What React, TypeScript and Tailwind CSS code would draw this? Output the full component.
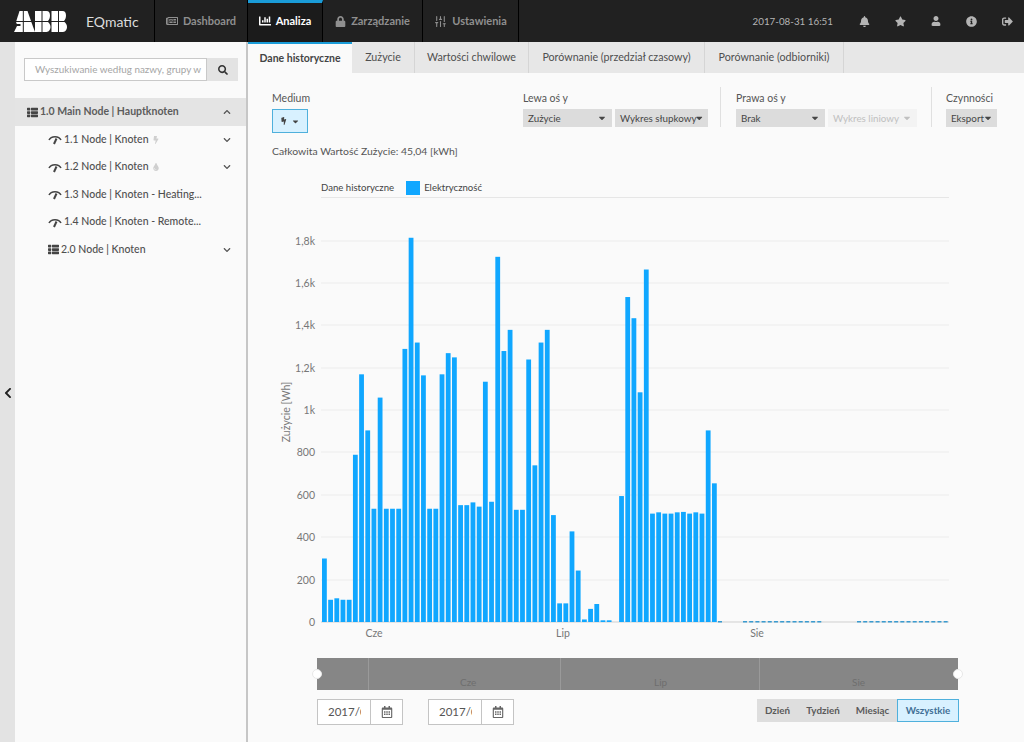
import { SlidersVertical } from "lucide-react";
import { FaBell, FaStar, FaUser, FaInfoCircle, FaLock, FaThList, FaBolt, FaTint, FaRegNewspaper, FaRegCalendarAlt, FaCaretDown, FaChevronLeft, FaChevronDown, FaChevronUp, FaSearch, FaChartBar, FaSignOutAlt } from "react-icons/fa";

const font = "font-['Lato',sans-serif]";

const bars = [
  300, 105, 112, 105, 105, 790, 1170, 905, 535, 1060, 535, 535, 535, 1290, 1815, 1320, 1165, 535, 535, 1170,
  1270, 1250, 552, 552, 565, 545, 1135, 568, 1725, 1280, 1380, 530, 530, 1240, 740, 1320, 1380, 505, 88, 88,
  428, 243, 12, 62, 85, 8, 8, 0, 595, 1535, 1435, 1085, 1665, 512, 518, 512, 512, 518, 520, 512, 518, 512, 905, 655,
];

const ticks = ["0", "200", "400", "600", "800", "1k", "1,2k", "1,4k", "1,6k", "1,8k"];
const tickY = [622, 580, 537, 495, 452, 410, 368, 325, 283, 241];

// dashes for the days with almost no usage
const dashes: number[] = [718];
for (let x = 743; x < 823; x += 6.19) dashes.push(x);
for (let x = 857; x < 948; x += 6.19) dashes.push(x);

function Logo() {
  return (
    <svg width="53" height="21" viewBox="0 0 53 21" fill="#fff">
      <polygon points="5.500,0 8.800,0 8.800,10 2.300,10" />
      <polygon points="2,11 8.800,11 8.800,21 0,21 3,15 6.500,15 6.500,13 2.800,13" />
      <polygon points="9.800,0 13.500,0 17,10 9.800,10" />
      <polygon points="9.800,11 17.300,11 21,21 9.800,21" />
      <rect x="21" y="0" width="6.500" height="10" />
      <rect x="21" y="11" width="6.500" height="10" />
      <path d="M28.500 0h4c2.500 0 3.500 2 3.500 4.500 0 2-.7 4-2 5.500h-5.500z" />
      <path d="M28.500 11h5.500c1.500 1.200 2.500 3 2.500 5s-1.500 5-4 5h-4z" />
      <rect x="37.500" y="0" width="6.500" height="10" />
      <rect x="37.500" y="11" width="6.500" height="10" />
      <path d="M45 0h3.500c2.500 0 3.500 2 3.500 4.500 0 2-.7 4-2 5.500h-5z" />
      <path d="M45 11h5.500c1.500 1.200 2.500 3 2.500 5s-1.500 5-4 5h-4z" />
    </svg>
  );
}

function NavItem({ icon, label, active, w }: { icon: React.ReactNode; label: string; active?: boolean; w: string }) {
  return (
    <div className={`${w} h-full flex items-center justify-center gap-[5px] border-r border-black text-[11px] font-bold ${active ? "bg-[#1b1b1b] text-white border-t-[3px] border-t-[#1a9cd8] pb-[3px]" : "text-[#8f8f8f]"}`}>
      {icon}
      <span>{label}</span>
    </div>
  );
}

function Select({ label, w, disabled }: { label: string; w: string; disabled?: boolean }) {
  return (
    <div className={`${w} h-[18px] flex items-center justify-between px-[5px] text-[9.800px] whitespace-nowrap ${disabled ? "bg-[#f3f3f3] text-[#c0c0c0]" : "bg-[#dcdcdc] text-[#464646]"}`}>
      <span>{label}</span>
      <FaCaretDown size={10} />
    </div>
  );
}

function TreeRow({ icon, label, extra, chevron }: { icon: React.ReactNode; label: string; extra?: React.ReactNode; chevron?: boolean }) {
  return (
    <div className="h-[27.5px] flex items-center pl-[33px] pr-[15px] text-[10.500px] font-medium text-[#4f4f4f]">
      {icon}
      <span className="ml-[2px]">{label}</span>
      {extra}
      {chevron && <FaChevronDown size={8} className="ml-auto text-[#555]" />}
    </div>
  );
}

function Meter() {
  return (
    <svg width="14" height="11" viewBox="0 0 14 11" fill="none" stroke="#444" strokeWidth="1.500">
      <path d="M1 6C3 1.500 11 1.500 13 6" />
      <path d="M8.500 4.500 6 10" strokeWidth="2" />
    </svg>
  );
}

function DateInput() {
  return (
    <div className="w-[86px] h-[26px] flex border border-[#c4c4c4] bg-white">
      <div className="w-[53px] border-r border-[#c4c4c4] pl-[10px] flex items-center text-[11.5px] text-[#555]">
        <input readOnly value="2017/06/01" className="w-[33px] bg-transparent outline-none" />
      </div>
      <div className="flex-1 flex items-center justify-center text-[#666]">
        <FaRegCalendarAlt size={12} />
      </div>
    </div>
  );
}

function Chart() {
  return (
    <svg width="776" height="456" viewBox="248 197 776 456" className="block">
      <line x1="321" x2="949" y1="197.500" y2="197.500" stroke="#e6e6e6" />
      {tickY.map((y, i) => (
        <g key={y}>
          <line x1="321" x2="949" y1={y} y2={y} stroke={i === 0 ? "#cfcfcf" : "#ececec"} />
          <text x="315" y={y + 3.500} textAnchor="end" fontSize="10.500" fill="#777">{ticks[i]}</text>
        </g>
      ))}
      <text transform="translate(290 412) rotate(-90)" textAnchor="middle" fontSize="10.500" fill="#777">Zużycie [Wh]</text>
      {bars.map((v, i) => v > 0 && (
        <rect key={i} x={322 + i * 6.19} y={622 - v * 0.2117} width="4.800" height={Math.max(v * 0.2117, 1)} fill="#10a7ff" />
      ))}
      {dashes.map((x) => (
        <rect key={x} x={x} y="621" width="4" height="1.500" fill="#3a9bd0" />
      ))}
      <text x="374" y="637" textAnchor="middle" fontSize="10.500" fill="#777">Cze</text>
      <text x="563" y="637" textAnchor="middle" fontSize="10.500" fill="#777">Lip</text>
      <text x="757" y="637" textAnchor="middle" fontSize="10.500" fill="#777">Sie</text>
    </svg>
  );
}

export default function App() {
  return (
    <div className={`w-[1024px] h-[742px] overflow-hidden flex flex-col bg-[#fafafa] ${font}`}>
      <header className="h-[42px] shrink-0 bg-[#212121] flex items-center">
        <div className="w-[155px] h-full flex items-center border-r border-black pl-[14px]">
          <Logo />
          <span className="ml-[19px] text-[14px] text-[#dcdcdc]">EQmatic</span>
        </div>
        <NavItem w="w-[93px]" label="Dashboard" icon={<FaRegNewspaper size={12} />} />
        <NavItem w="w-[75px]" active label="Analiza" icon={<FaChartBar size={12} />} />
        <NavItem w="w-[100px]" label="Zarządzanie" icon={<FaLock size={11} />} />
        <NavItem w="w-[96px]" label="Ustawienia" icon={<SlidersVertical size={13} />} />
        <div className="ml-auto flex items-center text-[#b4b4b4] pr-[11px]">
          <span className="text-[9.800px] mr-[26px]">2017-08-31 16:51</span>
          <div className="flex items-center gap-[25px]">
            <FaBell size={11} />
            <FaStar size={11} />
            <FaUser size={10} />
            <FaInfoCircle size={11} />
            <FaSignOutAlt size={11} />
          </div>
        </div>
      </header>

      <div className="flex-1 flex min-h-0">
        <div className="w-[15px] shrink-0 bg-[#e3e3e3] flex items-center justify-center pt-[2px]">
          <FaChevronLeft size={12} className="text-[#222]" />
        </div>
        <aside className="w-[231px] shrink-0 bg-[#fafafa] pt-[16px]">
          <div className="ml-[9px] w-[214px] h-[23px] flex">
            <div className="w-[183px] border border-[#c9c9c9] bg-white flex items-center pl-[10px] text-[9.900px] text-[#a5a5a5] whitespace-nowrap">Wyszukiwanie według nazwy, grupy w</div>
            <div className="w-[31px] bg-[#e3e3e3] flex items-center justify-center text-[#333]">
              <FaSearch size={10} />
            </div>
          </div>
          <div className="mt-[17px] h-[28px] bg-[#e4e4e4] flex items-center pl-[12px] pr-[15px] text-[10.500px] font-bold text-[#5c5c5c]">
            <FaThList size={11} className="text-[#444]" />
            <span className="ml-[2px]">1.0 Main Node | Hauptknoten</span>
            <FaChevronUp size={8} className="ml-auto text-[#555]" />
          </div>
          <TreeRow icon={<Meter />} label="1.1 Node | Knoten" chevron extra={<FaBolt size={8} className="ml-[3px] text-[#cfcfcf]" />} />
          <TreeRow icon={<Meter />} label="1.2 Node | Knoten" chevron extra={<FaTint size={8} className="ml-[3px] text-[#cfcfcf]" />} />
          <TreeRow icon={<Meter />} label="1.3 Node | Knoten - Heating..." />
          <TreeRow icon={<Meter />} label="1.4 Node | Knoten - Remote..." />
          <TreeRow icon={<FaThList size={11} className="text-[#444]" />} label="2.0 Node | Knoten" chevron />
        </aside>
        <div className="w-[2px] shrink-0 bg-[#c6c6c6]" />

        <main className="flex-1 min-w-0 flex flex-col">
          <div className="h-[31px] shrink-0 bg-[#e7e7e7] flex text-[10.700px] text-[#4f4f4f]">
            <div className="w-[104px] h-[32px] bg-[#fafafa] border-t-[2px] border-t-[#1a9cd8] flex items-center justify-center text-[10.500px] font-bold text-[#444]">Dane historyczne</div>
            <div className="w-[63px] flex items-center justify-center border-r border-[#d5d5d5]">Zużycie</div>
            <div className="w-[114px] flex items-center justify-center border-r border-[#d5d5d5]">Wartości chwilowe</div>
            <div className="w-[176px] flex items-center justify-center border-r border-[#d5d5d5]">Porównanie (przedział czasowy)</div>
            <div className="w-[139px] flex items-center justify-center border-r border-[#d5d5d5]">Porównanie (odbiorniki)</div>
          </div>

          <div className="flex pl-[24px] pt-[14px] h-[54px] shrink-0 text-[10.500px] text-[#555]">
            <div className="w-[251px]">
              <div className="h-[22px] pt-[4px] leading-[14px]">Medium</div>
              <div className="w-[36px] h-[24px] bg-[#d8f1ff] border border-[#4fb0dc] flex items-center justify-center gap-[3px] text-[#444]">
                <FaBolt size={8} className="-rotate-12" />
                <FaCaretDown size={9} />
              </div>
            </div>
            <div className="w-[198px] border-r border-[#e0e0e0]">
              <div className="h-[22px] pt-[4px] leading-[14px]">Lewa oś y</div>
              <div className="flex gap-[3px]">
                <Select w="w-[89px]" label="Zużycie" />
                <Select w="w-[93px]" label="Wykres słupkowy" />
              </div>
            </div>
            <div className="w-[211px] pl-[15px] border-r border-[#e0e0e0]">
              <div className="h-[22px] pt-[4px] leading-[14px]">Prawa oś y</div>
              <div className="flex gap-[3px]">
                <Select w="w-[89px]" label="Brak" />
                <Select w="w-[89px]" label="Wykres liniowy" disabled />
              </div>
            </div>
            <div className="pl-[14px]">
              <div className="h-[22px] pt-[4px] leading-[14px]">Czynności</div>
              <Select w="w-[51px]" label="Eksport" />
            </div>
          </div>

          <div className="pl-[24px] mt-[17px] text-[10.400px] text-[#555] leading-[14px]">Całkowita Wartość Zużycie: 45,04 [kWh]</div>

          <div className="ml-[73px] mt-[21px] h-[18px] flex items-center text-[9.600px] text-[#444]">
            <span>Dane historyczne</span>
            <span className="ml-[12px] w-[14px] h-[14px] bg-[#10a7ff]" />
            <span className="ml-[4px]">Elektryczność</span>
          </div>

          <Chart />

          <div className="ml-[69px] w-[641px] h-[32px] mt-[5px] bg-[#868686] relative text-[10px] text-[#6e6e6e]">
            <span className="absolute left-[51px] top-0 h-full w-px bg-[#9a9a9a]" />
            <span className="absolute left-[243px] top-0 h-full w-px bg-[#9a9a9a]" />
            <span className="absolute left-[442px] top-0 h-full w-px bg-[#9a9a9a]" />
            <span className="absolute left-[143px] top-[17px]">Cze</span>
            <span className="absolute left-[337px] top-[17px]">Lip</span>
            <span className="absolute left-[535px] top-[17px]">Sie</span>
            <span className="absolute -left-[5px] top-[11px] w-[10px] h-[10px] rounded-full bg-white border border-[#e8e8e8]" />
            <span className="absolute -right-[5px] top-[11px] w-[10px] h-[10px] rounded-full bg-white border border-[#e8e8e8]" />
          </div>

          <div className="ml-[69px] w-[642px] mt-[9px] flex items-start">
            <DateInput />
            <div className="ml-[25px]"><DateInput /></div>
            <div className="ml-auto flex h-[23px] text-[9.800px] font-bold text-[#5a5a5a]">
              <div className="w-[41px] bg-[#dedede] flex items-center justify-center">Dzień</div>
              <div className="w-[50px] bg-[#dedede] flex items-center justify-center">Tydzień</div>
              <div className="w-[49px] bg-[#dedede] flex items-center justify-center">Miesiąc</div>
              <div className="w-[62px] bg-[#d8f1ff] border border-[#4fb0dc] text-[#3f6f95] flex items-center justify-center">Wszystkie</div>
            </div>
          </div>
        </main>
      </div>
    </div>
  );
}
